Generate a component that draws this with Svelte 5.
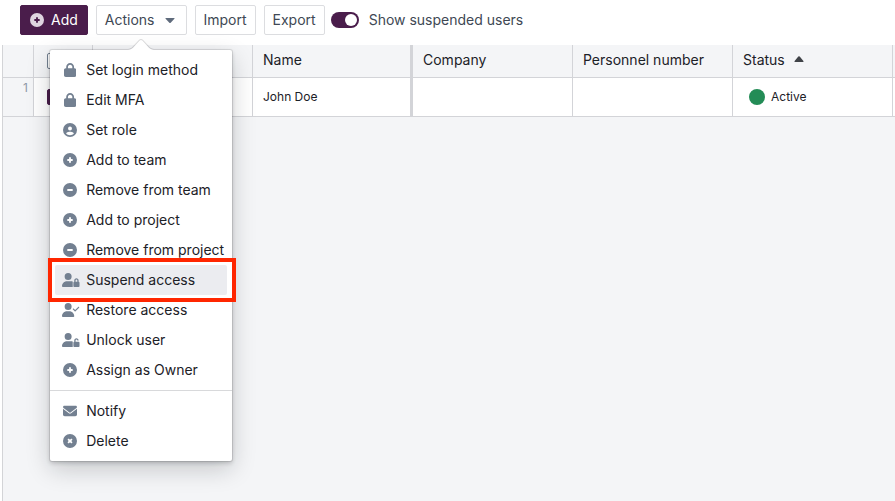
<script lang="ts">
  type Item = { label: string; icon: string };

  const disc = 'M256 512A256 256 0 1 0 256 0a256 256 0 1 0 0 512z';
  const person = 'M224 256A128 128 0 1 0 224 0a128 128 0 1 0 0 256zM178 304C80 304 0 384 0 482c0 17 13 30 30 30H';

  const icons: Record<string, { w: number; d: string }> = {
    lock: { w: 448, d: 'M144 144v48H304V144c0-44.2-35.8-80-80-80s-80 35.8-80 80zM80 192V144C80 64.5 144.5 0 224 0s144 64.5 144 144v48h16c35.3 0 64 28.7 64 64V448c0 35.3-28.7 64-64 64H64c-35.3 0-64-28.7-64-64V256c0-35.3 28.7-64 64-64H80z' },
    plus: { w: 512, d: disc + 'M222 354V290H158V222H222V158H290V222H354V290H290V354z' },
    minus: { w: 512, d: disc + 'M158 222H354V290H158z' },
    cross: { w: 512, d: disc + 'M209 163L256 210L303 163L349 209L302 256L349 303L303 349L256 302L209 349L163 303L210 256L163 209z' },
    user: { w: 512, d: 'M399 384.2C376.9 345.8 335.4 320 288 320H224c-47.4 0-88.9 25.8-111 64.2c35.2 39.2 86.2 63.8 143 63.8s107.8-24.7 143-63.8zM0 256a256 256 0 1 1 512 0A256 256 0 1 1 0 256zm256 16a72 72 0 1 0 0-144 72 72 0 1 0 0 144z' },
    mail: { w: 512, d: 'M48 64C21.5 64 0 85.5 0 112c0 15.1 7.1 29.3 19.2 38.4L236.8 313.6c11.4 8.5 27 8.5 38.4 0L492.8 150.4c12.1-9.1 19.2-23.3 19.2-38.4c0-26.5-21.5-48-48-48H48zM0 176V384c0 35.3 28.7 64 64 64H448c35.3 0 64-28.7 64-64V176L294.4 339.2c-22.8 17.1-54 17.1-76.8 0L0 176z' },
    userLock: { w: 640, d: person + '392V352c0-12 4-22 9-31-28-11-58-17-92-17zM528 240c17.7 0 32 14.3 32 32v48H496V272c0-17.7 14.3-32 32-32zm-80 32v48c-17.7 0-32 14.3-32 32V480c0 17.7 14.3 32 32 32H608c17.7 0 32-14.3 32-32V352c0-17.7-14.3-32-32-32V272c0-44.2-35.8-80-80-80s-80 35.8-80 80z' },
    userUnlock: { w: 640, d: person + '392V352c0-12 4-22 9-31-28-11-58-17-92-17zM496 320V272c0-17.7 14.3-32 32-32s32 14.3 32 32h48c0-44.2-35.8-80-80-80s-80 35.8-80 80v48c-17.7 0-32 14.3-32 32V480c0 17.7 14.3 32 32 32H608c17.7 0 32-14.3 32-32V352c0-17.7-14.3-32-32-32H496z' },
    userCheck: { w: 640, d: person + '418c17 0 30-13 30-30C448 384 368 304 270 304zM625 177L497 305c-9 9-25 9-34 0l-64-64c-9-9-9-25 0-34s25-9 34 0l47 47L591 143c9-9 25-9 34 0s9 25 0 34z' },
  };

  const groups: Item[][] = [
    [
      { label: 'Set login method', icon: 'lock' },
      { label: 'Edit MFA', icon: 'lock' },
      { label: 'Set role', icon: 'user' },
      { label: 'Add to team', icon: 'plus' },
      { label: 'Remove from team', icon: 'minus' },
      { label: 'Add to project', icon: 'plus' },
      { label: 'Remove from project', icon: 'minus' },
      { label: 'Suspend access', icon: 'userLock' },
      { label: 'Restore access', icon: 'userCheck' },
      { label: 'Unlock user', icon: 'userUnlock' },
      { label: 'Assign as Owner', icon: 'plus' },
    ],
    [
      { label: 'Notify', icon: 'mail' },
      { label: 'Delete', icon: 'cross' },
    ],
  ];

  let open = $state(true);
  let showSuspended = $state(true);
  let current = $state('Suspend access');
</script>

{#snippet icon(name: string)}
  <svg class="icon" class:wide={icons[name].w > 512} viewBox="0 0 {icons[name].w} 512" aria-hidden="true">
    <path fill-rule="evenodd" d={icons[name].d} />
  </svg>
{/snippet}

<div class="page">
  <div class="toolbar">
    <button class="btn primary">{@render icon('plus')}Add</button>
    <div class="dropdown">
      <button class="btn" aria-expanded={open} onclick={() => (open = !open)}>
        Actions
        <svg class="caret" viewBox="0 0 10 5" aria-hidden="true"><path d="M1 0h8q1 0 .4.8L5.7 4.7q-.7.6-1.4 0L.6.8Q0 0 1 0z" /></svg>
      </button>
      {#if open}
        <div class="menu">
          <svg class="arrow" viewBox="0 0 30 30" aria-hidden="true">
            <path class="arrow-edge" d="M8.11 6.302c1.015-.936 1.887-2.922 1.887-4.297v26c0-1.378-.868-3.357-1.888-4.297L.925 17.09c-1.237-1.14-1.233-3.034 0-4.17L8.11 6.302z" />
            <path class="arrow-fill" d="M8.787 7.036c1.22-1.125 2.21-3.376 2.21-5.03V0v30-2.005c0-1.654-.983-3.9-2.21-5.03l-7.183-6.616c-.81-.746-.802-1.96 0-2.7l7.183-6.614z" />
          </svg>
          {#each groups as group}
            <ul>
              {#each group as item}
                <li class:marked={item.label === current}>
                  <button class="item" onclick={() => (current = item.label)}>
                    <span class="slot">{@render icon(item.icon)}</span>{item.label}
                  </button>
                </li>
              {/each}
            </ul>
          {/each}
        </div>
      {/if}
    </div>
    <button class="btn">Import</button>
    <button class="btn">Export</button>
    <label class="switch">
      <input type="checkbox" role="switch" bind:checked={showSuspended} />
      Show suspended users
    </label>
  </div>

  <div class="grid">
    <table>
      <colgroup>
        <col class="c-num" />
        <col class="c-check" />
        <col class="c-std" />
        <col class="c-std" />
        <col class="c-std" />
        <col class="c-std" />
        <col class="c-std" />
        <col />
      </colgroup>
      <thead>
        <tr>
          <th></th>
          <th class="check"><input type="checkbox" aria-label="Select all" /></th>
          <th></th>
          <th class="frozen">Name</th>
          <th>Company</th>
          <th>Personnel number</th>
          <th aria-sort="ascending">
            Status
            <svg class="sort" viewBox="0 0 10 6" aria-hidden="true"><path d="M1 6h8q1 0 .4-.9L5.7.5Q5 0 4.3.5L.6 5.1Q0 6 1 6z" /></svg>
          </th>
          <th class="rest"></th>
        </tr>
      </thead>
      <tbody>
        <tr>
          <td class="num">1</td>
          <td class="check"><input type="checkbox" aria-label="Select John Doe" checked /></td>
          <td></td>
          <td class="frozen">John Doe</td>
          <td></td>
          <td></td>
          <td class="status"><span class="state"><span class="dot"></span>Active</span></td>
          <td class="rest"></td>
        </tr>
      </tbody>
    </table>
  </div>
</div>

<style>
  :global(body) {
    margin: 0;
    background: #fff;
  }

  .page {
    display: flex;
    flex-direction: column;
    min-height: 100vh;
    font-family: Inter, 'Liberation Sans', sans-serif;
    font-size: 14px;
    line-height: 20px;
    color: #1c2127;
  }

  .toolbar {
    display: flex;
    align-items: center;
    gap: 8px;
    padding: 5px 20px 10px;
  }

  .btn {
    display: flex;
    align-items: center;
    height: 30px;
    padding: 0 8px;
    border: 1px solid #dcdde0;
    border-radius: 2px;
    background: #fff;
    color: #404854;
    font: inherit;
    white-space: nowrap;
  }

  .primary {
    gap: 7px;
    padding: 0 9px;
    border-color: #4a1d4b;
    background: #4a1d4b;
    color: #fff;
  }

  .primary .icon {
    fill: #dfd5e0;
  }

  .icon {
    flex: none;
    height: 14px;
    fill: #738091;
  }

  .caret {
    width: 10px;
    height: 5px;
    margin: 0 3px 0 10px;
    fill: #5f6b7c;
  }

  .switch {
    display: flex;
    align-items: center;
    gap: 10px;
    margin-left: -2px;
    color: #404854;
  }

  .switch input {
    appearance: none;
    display: flex;
    width: 28px;
    height: 16px;
    margin: 0;
    padding: 2px;
    box-sizing: border-box;
    border-radius: 8px;
    background: #8f99a8;
  }

  .switch input::before {
    content: '';
    width: 12px;
    height: 12px;
    border-radius: 50%;
    background: #fff;
  }

  .switch input:checked {
    justify-content: flex-end;
    background: #4a1d4b;
  }

  .dropdown {
    position: relative;
  }

  .menu {
    position: absolute;
    z-index: 10;
    top: calc(100% + 15px);
    left: 50%;
    width: 182px;
    transform: translateX(-50%);
    border-radius: 2px;
    background: #fff;
    box-shadow: 0 0 0 1px rgba(17, 20, 24, 0.1), 0 2px 4px rgba(17, 20, 24, 0.2), 0 8px 24px rgba(17, 20, 24, 0.2);
  }

  .arrow {
    position: absolute;
    top: -11px;
    left: calc(50% - 15px);
    width: 30px;
    height: 30px;
    transform: rotate(90deg);
    pointer-events: none;
  }

  .arrow-edge {
    fill: #111418;
    fill-opacity: 0.15;
  }

  .arrow-fill {
    fill: #fff;
  }

  ul {
    position: relative;
    margin: 0;
    padding: 5px;
    list-style: none;
  }

  ul + ul {
    border-top: 1px solid #d8d9db;
  }

  .item {
    display: flex;
    align-items: center;
    gap: 8px;
    width: 100%;
    height: 30px;
    padding: 0 7px;
    border: 0;
    border-radius: 2px;
    background: none;
    color: inherit;
    font: inherit;
    white-space: nowrap;
  }

  .slot {
    display: flex;
    flex: none;
    justify-content: center;
    width: 16px;
  }

  .slot:has(.wide) {
    justify-content: flex-start;
  }

  .item:hover,
  .marked .item {
    background: #ebecf0;
  }

  .marked {
    position: relative;
  }

  .marked::after {
    content: '';
    position: absolute;
    inset: -7px -9px -7px -7px;
    border: 4px solid #ff2600;
    pointer-events: none;
  }

  .grid {
    flex: 1;
    margin-left: 2px;
    border-left: 1px solid #d3d4d7;
    background: #f4f5f7;
    overflow: hidden;
  }

  table {
    width: 100%;
    border-collapse: separate;
    border-spacing: 0;
    table-layout: fixed;
  }

  .c-num {
    width: 31px;
  }

  .c-check {
    width: 59px;
  }

  .c-std {
    width: 160px;
  }

  th,
  td {
    box-sizing: border-box;
    padding: 0 10px;
    border-right: 1px solid #d3d4d8;
    border-bottom: 1px solid #d3d4d8;
    text-align: left;
    white-space: nowrap;
  }

  th {
    height: 33px;
    padding-bottom: 2px;
    font-weight: 400;
  }

  td {
    height: 39px;
    background: #fff;
    font-size: 12px;
  }

  .frozen {
    border-right: 3px solid #d3d4d8;
  }

  .rest {
    padding: 0;
    border-right: 0;
  }

  .num {
    padding: 0 5px 0 0;
    background: #f4f5f7;
    color: #8f99a8;
    text-align: right;
    vertical-align: top;
  }

  .check {
    padding: 0 13px;
  }

  .check input {
    appearance: none;
    display: block;
    box-sizing: border-box;
    width: 16px;
    height: 16px;
    margin: 0;
    border: 1px solid #738091;
    border-radius: 2px;
    background: #fff;
  }

  .check input:checked {
    border-color: #4a1d4b;
    background: #4a1d4b;
  }

  .sort {
    width: 10px;
    height: 6px;
    margin: 0 0 3px 5px;
    fill: #404348;
  }

  .status {
    padding-left: 16px;
  }

  .state {
    display: flex;
    align-items: center;
    gap: 6px;
  }

  .dot {
    width: 16px;
    height: 16px;
    border-radius: 50%;
    background: #238c56;
  }
</style>
